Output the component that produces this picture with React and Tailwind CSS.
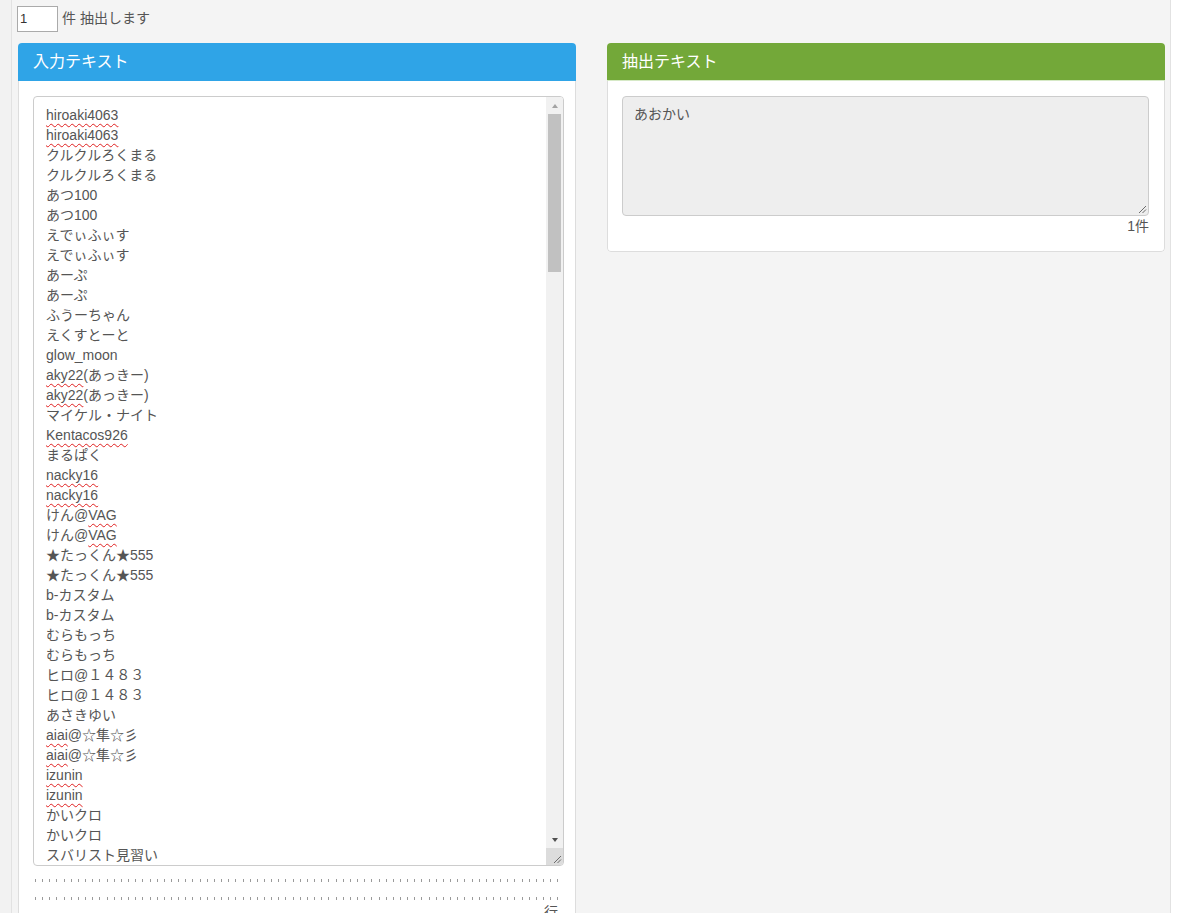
const names = [
  [['hiroaki4063', true]],
  [['hiroaki4063', true]],
  [['クルクルろくまる']],
  [['クルクルろくまる']],
  [['あつ100']],
  [['あつ100']],
  [['えでぃふぃす']],
  [['えでぃふぃす']],
  [['あーぷ']],
  [['あーぷ']],
  [['ふうーちゃん']],
  [['えくすとーと']],
  [['glow_moon']],
  [['aky22', true], ['(あっきー)']],
  [['aky22', true], ['(あっきー)']],
  [['マイケル・ナイト']],
  [['Kentacos926', true]],
  [['まるぱく']],
  [['nacky16', true]],
  [['nacky16', true]],
  [['けん@'], ['VAG', true]],
  [['けん@'], ['VAG', true]],
  [['★たっくん★555']],
  [['★たっくん★555']],
  [['b-カスタム']],
  [['b-カスタム']],
  [['むらもっち']],
  [['むらもっち']],
  [['ヒロ@１４８３']],
  [['ヒロ@１４８３']],
  [['あさきゆい']],
  [['aiai', true], ['@☆隼☆彡']],
  [['aiai', true], ['@☆隼☆彡']],
  [['izunin', true]],
  [['izunin', true]],
  [['かいクロ']],
  [['かいクロ']],
  [['スバリスト見習い']],
]

const ticks = Array.from({ length: 74 })

function Grip({ className }) {
  return (
    <svg className={className} width="9" height="9" viewBox="0 0 9 9">
      <path d="M8 1 L1 8 M8 4.5 L4.5 8" stroke="#6b6b6b" strokeWidth="1" />
    </svg>
  )
}

function Panel({ title, headClass, children }) {
  return (
    <div className="w-[558px] overflow-hidden rounded-[4px] bg-white">
      <div className={`flex h-[38px] items-center px-[15px] text-[16px] text-white ${headClass}`}>{title}</div>
      <div className="rounded-b-[4px] border-x border-b border-[#dddddd] px-[14px] pt-[15px]">{children}</div>
    </div>
  )
}

export default function App() {
  return (
    <div
      className="flex min-h-[913px] bg-white text-[14px] leading-[20px] text-[#555555]"
      style={{ fontFamily: '"Liberation Sans", "Noto Sans CJK JP", sans-serif' }}
    >
      <div className="w-[11px] shrink-0 bg-[#f2f2f2]" />
      <main className="w-[1160px] shrink-0 border-x border-[#e2e2e2] bg-[#f4f4f4] pl-[5px]">
        {/* count row */}
        <div className="flex h-[43px] items-start pt-[6px]">
          <div className="flex h-[26px] w-[41px] items-center border border-[#aaaaaa] bg-white px-[2px] text-[13px] text-[#333]">
            1
          </div>
          <span className="ml-[4px] leading-[25px]">件 抽出します</span>
        </div>

        <div className="ml-px flex items-start gap-[31px]">
          <Panel title="入力テキスト" headClass="bg-[#2fa4e7] border-b border-[#2fa4e7]">
            <div className="relative h-[770px] w-[531px] overflow-hidden rounded-[4px] border border-[#cccccc] bg-white">
              <div className="pl-[12px] pt-[8px]">
                {names.map((parts, i) => (
                  <div key={i} className="h-[20px] whitespace-nowrap">
                    {parts.map(([t, sq], j) => (
                      <span
                        key={j}
                        className={sq ? 'underline decoration-[#e02020] decoration-wavy decoration-1 underline-offset-[3px]' : ''}
                      >
                        {t}
                      </span>
                    ))}
                  </div>
                ))}
              </div>

              {/* scrollbar */}
              <div className="absolute right-0 top-0 flex h-[751px] w-[17px] flex-col bg-[#f1f1f1]">
                <div className="flex h-[17px] items-center justify-center">
                  <div className="h-0 w-0 border-x-[3.5px] border-b-[4px] border-x-transparent border-b-[#a3a3a3]" />
                </div>
                <div className="mx-[2px] h-[158px] bg-[#c1c1c1]" />
                <div className="flex-1" />
                <div className="flex h-[17px] items-center justify-center">
                  <div className="h-0 w-0 border-x-[3.5px] border-t-[4px] border-x-transparent border-t-[#505050]" />
                </div>
              </div>
              <div className="absolute bottom-0 right-0 flex h-[17px] w-[17px] items-end justify-end bg-[#dcdcdc] p-px">
                <Grip />
              </div>
            </div>

            <div className="ml-[2px] mt-[13px] flex w-[524px] justify-between">
              {ticks.map((_, i) => (
                <span key={i} className="h-[3px] w-px bg-[#9a9a9a]" />
              ))}
            </div>
            <div className="ml-[2px] mt-[15px] flex w-[524px] justify-between">
              {ticks.map((_, i) => (
                <span key={i} className="h-[3px] w-px bg-[#9a9a9a]" />
              ))}
            </div>
            <div className="w-[531px] pr-[6px] pt-[2px] text-right">行</div>
            <div className="h-[40px]" />
          </Panel>

          <Panel title="抽出テキスト" headClass="bg-[#73a839] border-b border-[#d6e9c6]">
            <div className="relative h-[120px] w-[527px] rounded-[4px] border border-[#cccccc] bg-[#eeeeee] px-[11px] pt-[7px]">
              あおかい
              <Grip className="absolute bottom-[1px] right-[1px]" />
            </div>
            <div className="w-[527px] pb-[15px] text-right">1件</div>
          </Panel>
        </div>
      </main>
    </div>
  )
}
